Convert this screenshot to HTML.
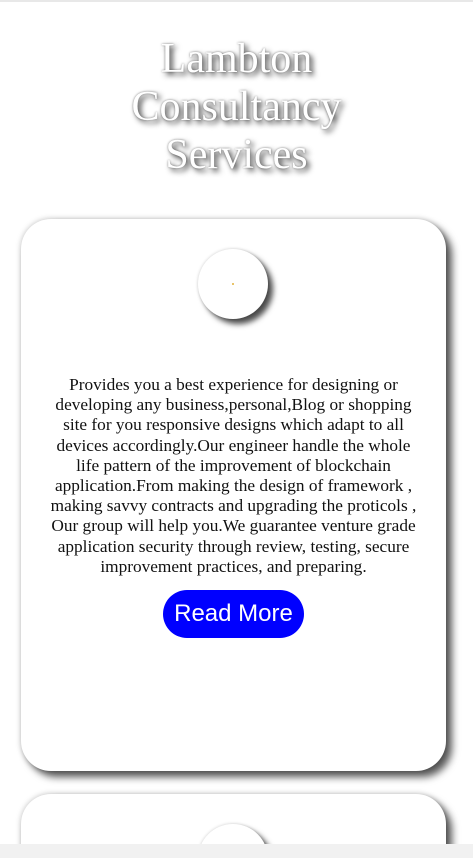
<!DOCTYPE html>
<html><head><meta charset="utf-8"><style>
html,body{margin:0;padding:0;background:#fff;width:473px;height:858px;overflow:hidden;position:relative;font-family:"Liberation Serif",serif}
.top{position:absolute;left:0;top:0;width:473px;height:2px;background:#e8e8e8}
.title{position:absolute;left:0;width:473px;top:35px;text-align:center;font-size:42px;line-height:48px;color:#fff;text-shadow:3px 3px 6px #333, 0 0 2px #888}
.card{position:absolute;left:21px;width:425px;background:#fff;border-radius:30px;box-shadow:6px 6px 8px rgba(0,0,0,0.65),0 0 6px rgba(0,0,0,0.25)}
.circ{position:absolute;left:177px;top:30px;width:70px;height:70px;border-radius:50%;background:#fff;box-shadow:5px 5px 6px rgba(0,0,0,0.7),0 0 3px rgba(0,0,0,0.2)}
.dot{position:absolute;left:34px;top:34px;width:2px;height:2px;background:#e9c46a}
.p{position:absolute;left:-10px;width:445px;top:156px;text-align:center;font-size:17.3px;line-height:20.2px;color:#111;white-space:nowrap}
.btn{position:absolute;left:142px;top:371px;width:141px;height:48px;border-radius:24px;background:#0000ff;color:#fff;font-family:"Liberation Sans",sans-serif;font-size:24px;line-height:48px;text-align:center}
.bot{position:absolute;left:0;top:844px;width:473px;height:14px;background:#f1f1f1}
</style></head><body>
<div class="top"></div>
<div class="title">Lambton<br>Consultancy<br>Services</div>
<div class="card" style="top:219px;height:552px">
<div class="circ"><div class="dot"></div></div>
<div class="p">Provides you a best experience for designing or<br>developing any business,personal,Blog or shopping<br>site for you responsive designs which adapt to all<br>devices accordingly.Our engineer handle the whole<br>life pattern of the improvement of blockchain<br>application.From making the design of framework ,<br>making savvy contracts and upgrading the proticols ,<br>Our group will help you.We guarantee venture grade<br>application security through review, testing, secure<br>improvement practices, and preparing.</div>
<div class="btn">Read More</div>
</div>
<div class="card" style="top:794px;height:64px;border-radius:30px 30px 0 0">
<div class="circ"></div>
</div>
<div class="bot"></div>
</body></html>
